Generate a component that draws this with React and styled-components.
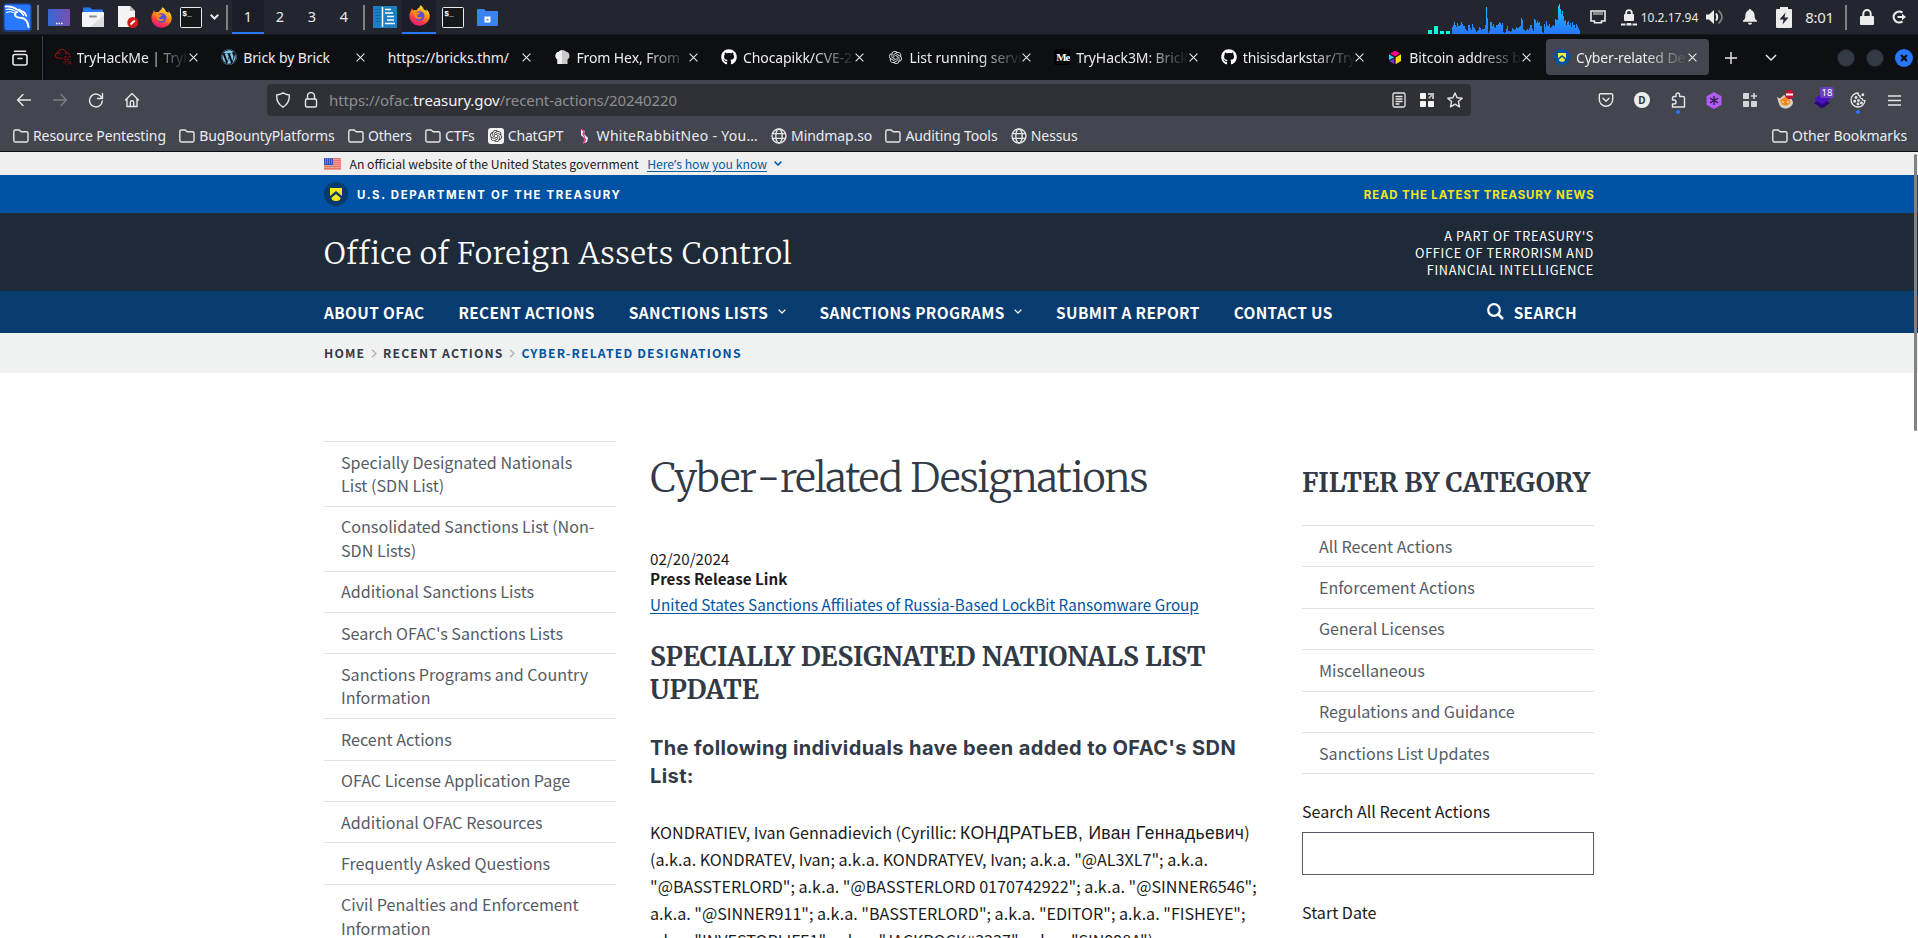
import React from 'react';
import styled, { createGlobalStyle } from 'styled-components';
import { SiOpenai, SiTryhackme, SiKalilinux } from 'react-icons/si';
import { FaGithub, FaWordpress } from 'react-icons/fa';

const SANS = '"Noto Sans CJK SC", "Noto Sans", sans-serif';
const UI = '"Noto Sans", sans-serif';
const SERIF = 'Merriweather, "Noto Serif", serif';
const PUBLIC = 'Inter, sans-serif';

const Global = createGlobalStyle`
  html, body { margin: 0; height: 938px; overflow: hidden; background: #fff; }
  * { box-sizing: border-box; }
  svg { display: block; flex: none; }
`;

/* ---------- desktop panel ---------- */
const Screen = styled.div`
  display: flex; flex-direction: column; height: 938px; overflow: hidden;
`;
const Panel = styled.header`
  display: flex; height: 35px; flex: none; align-items: stretch;
  background: #24262f; border-bottom: 1px solid #17181d; font-family: ${UI}; color: #e8e8e8;
`;
const Slot = styled.div`
  width: ${p => p.$w}px; display: flex; align-items: center; justify-content: center; flex: none;
`;
const PanelRule = styled.i`width: 2px; height: 25px; background: #808187;`;
const Workspace = styled(Slot)`
  font-size: 14.5px; padding-bottom: 1px;
  border-bottom: 2px solid ${p => (p.$active ? '#2777ff' : 'transparent')};
  background: ${p => (p.$active ? '#1b1d27' : 'transparent')};
`;
const Spacer = styled.div`flex: 1;`;
const PanelText = styled.span`font-size: ${p => p.$size}px; letter-spacing: ${p => p.$ls || 0}px; white-space: nowrap;`;

/* ---------- browser chrome ---------- */
const TabStrip = styled.div`
  display: flex; align-items: center; height: 45px; flex: none; background: #0e0f13; font-family: ${UI};
`;
const TabOverview = styled.div`
  width: 43px; height: 44px; display: flex; align-items: center; justify-content: center;
  padding-right: 2px; border-right: 1px solid #3d3f45; margin-right: 3.6px;
`;
const Tab = styled.div`
  width: 163px; margin-right: 3.6px; height: 36px; border-radius: 4px; padding: 0 10px 0 8px; flex: none;
  display: flex; align-items: center; background: ${p => (p.$active ? '#43464e' : 'transparent')};
  margin-top: -1px;
`;
const Favicon = styled.span`width: 16px; height: 16px; margin-right: 6px; flex: none; display: flex; align-items: center; justify-content: center;`;
const TabTitle = styled.span`
  flex: 1; min-width: 0; overflow: hidden; white-space: nowrap; font-size: 14px; letter-spacing: -0.1px; color: #ececee;
  line-height: 22px; padding-top: 1px;
  ${p => p.$fade && 'mask-image: linear-gradient(to right, #000 62%, rgba(0,0,0,.08) 98%);'}
`;
const CloseBox = styled.span`width: 12px; display: flex; justify-content: center; flex: none;`;
const MediumBadge = styled.span`
  width: 16px; height: 16px; border-radius: 2px; background: #000; color: #fff; overflow: hidden;
  font: 700 11px/16px "Liberation Serif", serif; padding-left: 2px; letter-spacing: -1px;
`;
const WindowDot = styled.span`
  width: 16px; height: 16px; border-radius: 50%; background: ${p => (p.$close ? '#2777ff' : '#333945')};
  margin-right: ${p => (p.$close ? 6 : 13)}px; display: flex; align-items: center; justify-content: center;
  box-shadow: 0 0 0 1px ${p => (p.$close ? '#2777ff' : '#20242c')};
`;
const Toolbar = styled.div`
  display: flex; align-items: center; height: 40px; flex: none; background: #43464e; font-family: ${UI}; padding-left: 6px;
`;
const UrlBar = styled.div`
  margin-left: 117px; width: 1204px; height: 32px; border-radius: 4px; background: #303136;
  display: flex; align-items: center; padding: 0 2px;
`;
const UrlText = styled.span`
  flex: 1; margin-left: 4px; font-size: 15px; letter-spacing: -0.1px; color: #8d8e92; white-space: nowrap;
  b { font-weight: 400; color: #f2f2f3; }
`;
const ToolSlot = styled.div`
  width: 36px; height: 36px; position: relative; display: flex; align-items: center; justify-content: center; flex: none;
`;
const Dot = styled.i`position: absolute; bottom: 4px; left: 16px; width: 4px; height: 4px; border-radius: 50%; background: #2777ff;`;
const Count = styled.i`
  position: absolute; top: 5px; left: 16px; width: 14px; height: 11px; border-radius: 2px; background: #6a3fc0;
  color: #fff; font: 400 9.5px/11px ${UI}; text-align: center;
`;
const LetterD = styled.span`
  width: 16px; height: 16px; border-radius: 50%; background: #ececec; color: #33353b;
  font: 700 10px/16px ${UI}; text-align: center;
`;
const Bookmarks = styled.div`
  display: flex; align-items: center; height: 32px; flex: none; background: #43464e; padding: 0 11px 0 13px;
  border-bottom: 1px solid #0c0c0f; font-family: ${UI};
`;
const Bookmark = styled.span`
  display: flex; align-items: center; gap: 4px; font-size: 14px; letter-spacing: ${p => p.$ls ?? -0.1}px; color: #ececee;
  white-space: nowrap; margin-right: 13.3px; line-height: 20px;
  &:last-child { margin-right: 0; }
`;
const ChatIcon = styled.span`
  width: 16px; height: 16px; border-radius: 3px; background: #f4f4f4; display: flex; align-items: center; justify-content: center;
`;

/* ---------- web page ---------- */
const Page = styled.div`flex: 1; overflow: hidden; background: #fff; position: relative; font-family: ${SANS}; color: #1b1b1b;`;
const ScrollThumb = styled.i`position: absolute; right: 1px; top: 2px; width: 3px; height: 277px; border-radius: 2px; background: #808283;`;
const Band = styled.div`
  height: ${p => p.$h}px; background: ${p => p.$bg}; padding: 0 324px; display: flex; align-items: center;
`;
const BannerText = styled.span`font-size: 12.2px; margin: 0 8.5px; white-space: nowrap;`;
const BannerLink = styled.a`
  font-size: 12.2px; color: #005ea2; text-decoration: underline; text-underline-offset: 2px; white-space: nowrap; margin-right: 7px;
  span { font-family: ${UI}; }
`;
const Dept = styled.span`
  font: 700 11.4px ${PUBLIC}; letter-spacing: 1.68px; color: #fff; margin-left: 9px; flex: 1; padding-top: 1px;
`;
const News = styled.span`font: 700 11.4px ${PUBLIC}; letter-spacing: .89px; color: #f6e41b; margin-right: -.5px; padding-top: 1px;`;
const Office = styled.span`font: 300 30px ${SERIF}; letter-spacing: .73px; color: #fff; flex: 1; padding-top: 2px;`;
const PartOf = styled.span`
  font-size: 12.7px; line-height: 17px; letter-spacing: .67px; color: #fff; text-align: right;
`;
const NavItem = styled.span`
  display: flex; align-items: center; gap: 9.4px; font-size: 15.4px; font-weight: 700; letter-spacing: .36px; color: #fff;
  margin-right: 34px; white-space: nowrap; line-height: 22px; padding-bottom: 1px;
`;
const NavSearch = styled(NavItem)`margin: 0 17px 0 auto;`;
const Crumb = styled.span`
  font-size: 12.2px; font-weight: 700; letter-spacing: 1.18px; color: ${p => (p.$on ? '#0053a4' : '#323a45')}; white-space: nowrap;
`;
const CrumbSep = styled.span`width: 17.8px; display: flex; justify-content: center;`;

const Columns = styled.main`
  display: grid; grid-template-columns: 292px 618px 292px; column-gap: 34px; padding: 68px 0 0 324px; align-items: start;
`;
const LinkList = styled.ul`
  list-style: none; margin: 0; padding: 0; border-bottom: 1px solid #dfe1e2;
`;
const LinkRow = styled.li`
  border-top: 1px solid #dfe1e2; padding: 8.6px 17px 8.4px; font-size: 16.13px; line-height: 23.4px; color: #565c65;
`;
const Article = styled.article`padding-top: 11.5px;`;
const Title = styled.h1`
  margin: 0 0 45.5px; font: 300 40px/50px ${SERIF}; letter-spacing: -1px; color: #323a45; white-space: nowrap;
`;
const TitleHyphen = styled.span`margin: 0 .8px;`;
const Meta = styled.div`font-size: 15.2px; line-height: 20px; font-weight: ${p => (p.$bold ? 700 : 400)};`;
const ReleaseLink = styled.a`
  display: block; margin-top: 4px; font-size: 15.22px; line-height: 24px; color: #0053a4;
  text-decoration: underline; text-underline-offset: 2px; white-space: nowrap;
`;
const Heading = styled.h2`
  margin: ${p => p.$m}; font: 700 26.2px/33px ${SERIF}; color: #323a45; white-space: nowrap; letter-spacing: .04px;
`;
const SubHeading = styled.h3`
  margin: 28px 0; font: 700 20px/28.3px ${PUBLIC}; letter-spacing: .4px; color: #323a45; white-space: nowrap;
`;
const Body = styled.p`margin: 0; font-size: 16.12px; line-height: 27px; white-space: nowrap;`;
const Cyrillic = styled.span`font: 17.5px/1 "Liberation Sans", sans-serif; letter-spacing: .35px;`;
const Aside = styled.aside`padding-top: 25px;`;
const Field = styled.label`display: block; font-size: 16.1px; line-height: 23.4px; margin-top: 26px;`;
const Input = styled.input`display: block; width: 292px; height: 43px; margin-top: 8px; border: 1px solid #565c65; background: #fff;`;

/* ---------- drawings ---------- */
const Ico = ({ s = 16, w = 1.4, c = '#e6e6e8', children, vb = '0 0 16 16' }) => (
  <svg width={s} height={s} viewBox={vb} fill="none" stroke={c} strokeWidth={w} strokeLinecap="round" strokeLinejoin="round">{children}</svg>
);
const Folder = () => <Ico><path d="M.8 4V12.6a1.4 1.4 0 0 0 1.4 1.4H13.6a1.4 1.4 0 0 0 1.4-1.4V5.2a1.4 1.4 0 0 0-1.4-1.4H8.2L6.2 2H2.2A1.4 1.4 0 0 0 .8 3.4Z" /></Ico>;
const Globe = () => <Ico><circle cx="8" cy="8" r="7" /><ellipse cx="8" cy="8" rx="3.2" ry="7" /><path d="M1.6 5.6H14.4M1.6 10.4H14.4" /></Ico>;
const Chevron = ({ s = 8, c = '#fff', w = 1.3 }) => <svg width={s} height={s * 0.6} viewBox="0 0 10 6" fill="none" stroke={c} strokeWidth={w * 10 / s}><path d="M.8.8 5 5 9.2.8" /></svg>;
const RightMark = () => <svg width="6" height="9" viewBox="0 0 6 9" fill="none" stroke="#a9aeb1" strokeWidth="1.2"><path d="M1 .7 5 4.5 1 8.3" /></svg>;
const Close = () => <svg width="9" height="9" viewBox="0 0 9 9" stroke="#e6e6e8" strokeWidth="1.1"><path d="M.6.6 8.4 8.4M8.4.6.6 8.4" /></svg>;

const Firefox = () => (
  <svg width="21" height="21" viewBox="0 0 21 21">
    <defs>
      <linearGradient id="ffx" x1=".8" y1="0" x2=".3" y2="1"><stop offset="0" stopColor="#fff44f" /><stop offset=".4" stopColor="#ff980e" /><stop offset=".75" stopColor="#ff3647" /><stop offset="1" stopColor="#e31587" /></linearGradient>
    </defs>
    <path d="M11.4.3c2.4 1.4 3 3.2 3.6 4.4 1.6.4 2.2 1.2 2.4 1.9.2-.9 0-1.9-.4-2.7 2.3 1.6 3.7 4.2 3.7 7.2C20.7 16.4 16 20.7 10.5 20.7S.4 16.3.4 10.7c0-2.6 1.1-4.4 1.8-5.3L2.8 3.3 4.3 5.5C5.2 5 6.6 4.9 7.6 5.3 8.6 3 9.7 2.9 10.5 2.5 10.5 1.8 10.9.9 11.4.3Z" fill="url(#ffx)" />
    <circle cx="10.7" cy="11" r="4.8" fill="#5b4fd6" />
    <path d="M3.5 6.8C5 6 7 6.6 8.2 7.6L11.2 7.7C10.9 9 9.5 9.3 8.6 9.9 7.7 10.6 8 12 9.3 12.3 11 12.7 12 11.4 13.3 12.2 12 14.5 8.5 14.6 6.8 12.9 5.6 11.8 5.4 9.6 3.5 6.8Z" fill="#ff8a16" />
  </svg>
);
const Terminal = () => (
  <svg width="22" height="21" viewBox="0 0 22 21"><rect x=".5" y=".5" width="21" height="20" rx="1" fill="#15171b" stroke="#ececec" />
    <text x="2.3" y="9" fill="#fff" fontFamily="Liberation Mono" fontWeight="700" fontSize="8">$_</text></svg>
);
const Kali = () => (
  <svg width="29" height="29" viewBox="0 0 29 29"><rect width="29" height="29" rx="4" fill="#174aa8" opacity=".6" /><rect x="1.5" y="1.5" width="26" height="25.5" rx="2" fill="#2777ff" />
    <g fill="none" stroke="#fff" strokeLinecap="round">
      <path d="M2.500 3.500Q9 3 14 6.500Q18 8 20.500 12" strokeWidth="1.800" /><path d="M3 6.500Q8 5.500 12 8M3.500 9.500Q7 8 10.500 9.500" strokeWidth="1.200" />
      <path d="M14 9Q10.500 10.500 13 13.500 15 15 19 15 24.500 16 25.500 24" strokeWidth="2" /><path d="M16 6.500 21.500 9.500 23.500 13" strokeWidth="1.600" />
    </g></svg>
);
const DesktopIcon = () => (
  <svg width="22" height="17" viewBox="0 0 22 17"><defs><linearGradient id="dsk"><stop stopColor="#3568d4" /><stop offset="1" stopColor="#7a4fb0" /></linearGradient></defs>
    <rect width="22" height="17" rx="1" fill="url(#dsk)" /><path d="M8 14.5h1.5M10.5 14.5H12M13 14.5h1.5" stroke="#fff" strokeWidth="1.3" /></svg>
);
const FilesIcon = () => (
  <svg width="22" height="20" viewBox="0 0 22 20"><path d="M1 4V1.5A1 1 0 0 1 2 .5H8L10 2.5H20A1 1 0 0 1 21 3.5V7H1Z" fill="#2777ff" /><rect y="5" width="22" height="15" rx="1" fill="#f4f4f4" /><path d="M22 8V20H8Z" fill="#dedede" /><rect x="7" y="8.5" width="8" height="2" rx="1" fill="#8b8f98" /></svg>
);
const DocIcon = () => (
  <svg width="21" height="22" viewBox="0 0 21 22"><path d="M0 0H12L17 5V21H0Z" fill="#f4f4f4" /><path d="M12 0V5H17Z" fill="#bdbdbd" /><circle cx="14.8" cy="16.5" r="5.5" fill="#d41c1c" /><path d="M12.5 18.5 16.8 14.5" stroke="#fff" strokeWidth="2" /></svg>
);
const EditorIcon = () => (
  <svg width="24" height="22" viewBox="0 0 24 22"><rect width="24" height="22" fill="#1d7fc0" /><path d="M2 3.5H8M2 6.5H8M2 9.5H8M2 12.5H8M2 15.5H8" stroke="#1467a3" strokeWidth="1.2" /><path d="M9.5 1V21" stroke="#fff" strokeWidth="1.5" /><path d="M12 3.5H18M12 7H20M14 10.5H21M14 14H21M12 17.5H22" stroke="#fff" strokeWidth="1.6" /></svg>
);
const BlueFolder = () => (
  <svg width="21" height="17" viewBox="0 0 21 17"><path d="M1 0H7L9 2H20A1 1 0 0 1 21 3V16A1 1 0 0 1 20 17H1A1 1 0 0 1 0 16V1A1 1 0 0 1 1 0Z" fill="#3a83f2" /><rect x="7.5" y="7.5" width="6" height="6" fill="#fff" /><rect x="9.5" y="10" width="2" height="1.5" fill="#3a83f2" /></svg>
);

const LOAD = [7, 9, 12, 9, 7, 11, 8, 8, 9, 12, 10, 8, 8, 5, 4, 3, 9, 9, 6, 4, 10, 7, 6, 4, 2, 3, 4, 7, 6, 4, 5, 5, 5, 9, 27, 16, 1, 3, 12, 12, 8, 10, 7, 6, 9, 9, 10, 12, 11, 9, 11, 2, 1, 2, 5, 8, 3, 3, 2, 3, 6, 5, 4, 5, 7, 6, 6, 7, 8, 16, 14, 5, 4, 3, 4, 5, 4, 6, 9, 9, 5, 3, 15, 14, 11, 13, 11, 12, 8, 8, 2, 1, 10, 7, 13, 9, 8, 10, 6, 7, 8, 9, 8, 15, 14, 14, 28, 30, 25, 20, 23, 18, 13, 14, 9, 12, 13, 9, 11, 7, 12, 9, 9, 6, 10, 8, 6, 4];
const LoadGraph = () => (
  <svg width="152" height="34" viewBox="0 0 152 34" shapeRendering="crispEdges">
    <defs><linearGradient id="ld" gradientUnits="userSpaceOnUse" x1="0" y1="4" x2="0" y2="34"><stop stopColor="#10d8f0" /><stop offset=".6" stopColor="#2690f8" /><stop offset="1" stopColor="#2777ff" /></linearGradient></defs>
    {[4, 8, 3, 3].map((h, i) => <rect key={i} x={i * 6} y={34 - h} width="4" height={h} fill="#00ffdc" />)}
    {LOAD.map((h, i) => <rect key={i} x={24 + i} y={34 - h} width="1" height={h} fill="url(#ld)" />)}
  </svg>
);
const Badge = ({ s = 16, bg = '#0053a4', fg = '#ffee33' }) => (
  <svg width={s} height={s} viewBox="0 0 24 24"><circle cx="12" cy="12" r="12" fill={bg} /><path d="M6 6H18V14L12 9 6 14Z" fill={fg} /><path d="M7.5 15.8 12 12 16.5 15.8Q17 18.7 12 19 7 18.7 7.5 15.8Z" fill={fg} /></svg>
);
const Chef = () => <svg width="15" height="15" viewBox="0 0 15 15"><path d="M2.5 14V9.5C-.5 8 0 2 3.5 2 5-.3 10-.3 11.5 2 15 2 15.5 8 12.5 9.5V14Z" fill="#c9c9c9" /><path d="M2.5 14V9.5C-.5 8 0 2 3.5 2 4.3.8 5.8.3 7 .3V14Z" fill="#efefef" /></svg>;
const Cube = () => <svg width="14" height="15" viewBox="0 0 14 15"><path d="M7 .5 12 3.5 7 6.5 2 3.5Z" fill="#ff0080" /><path d="M7.6 7.5 13 4.3V11L7.6 14.2Z" fill="#ffe000" /><path d="M1 4.3 6.4 7.5 1 10Z" fill="#2ad4f0" /><path d="M6.4 8.5V14.2L1 11Z" fill="#7a2ad8" /></svg>;
const Flag = () => (
  <svg width="17" height="12" viewBox="0 0 17 12"><rect width="17" height="12" fill="#f5e9e4" />{[0, 2, 4, 6, 8, 10].map(y => <rect key={y} y={y + .3} width="17" height="1.15" fill="#e0433a" />)}
    <rect width="9" height="7" fill="#3a4fb5" />{[1, 3, 5].map(y => <path key={y} d={`M1 ${y}H9`} stroke="#c8cff5" strokeWidth=".8" strokeDasharray="1 1" />)}</svg>
);

const TABS = [
  ['TryHackMe | TryH', <SiTryhackme size={16} color="#c11111" />, true],
  ['Brick by Brick', <FaWordpress size={16} color="#7cc3e6" />],
  ['https://bricks.thm/', null],
  ['From Hex, From', <Chef />, true],
  ['Chocapikk/CVE-2', <FaGithub size={16} color="#fff" />, true],
  ['List running servi', <SiOpenai size={13} color="#e6e6e8" />, true],
  ['TryHack3M: Brick', <MediumBadge>Me</MediumBadge>, true],
  ['thisisdarkstar/Try', <FaGithub size={16} color="#fff" />, true],
  ['Bitcoin address b', <Cube />, true],
  ['Cyber-related De', <Badge />, true],
];

const SIDE_LINKS = [
  ['Specially Designated Nationals', 'List (SDN List)'], ['Consolidated Sanctions List (Non-', 'SDN Lists)'], ['Additional Sanctions Lists'],
  ["Search OFAC's Sanctions Lists"], ['Sanctions Programs and Country', 'Information'], ['Recent Actions'], ['OFAC License Application Page'],
  ['Additional OFAC Resources'], ['Frequently Asked Questions'], ['Civil Penalties and Enforcement', 'Information'],
];
const CATEGORIES = ['All Recent Actions', 'Enforcement Actions', 'General Licenses', 'Miscellaneous', 'Regulations and Guidance', 'Sanctions List Updates'];

function DesktopPanel() {
  return (
    <Panel>
      <Slot $w={34}><Kali /></Slot>
      <Slot $w={8}><PanelRule /></Slot>
      <Slot $w={34}><DesktopIcon /></Slot>
      <Slot $w={34}><FilesIcon /></Slot>
      <Slot $w={36}><DocIcon /></Slot>
      <Slot $w={30}><Firefox /></Slot>
      <Slot $w={30}><Terminal /></Slot>
      <Slot $w={16}><Chevron s={9} w={2} c="#e8e8e8" /></Slot>
      <Slot $w={10}><PanelRule /></Slot>
      {[1, 2, 3, 4].map(n => <Workspace key={n} $w={32} $active={n === 1}>{n}</Workspace>)}
      <Slot $w={8}><PanelRule /></Slot>
      <Slot $w={34}><EditorIcon /></Slot>
      <Workspace $w={34} $active><Firefox /></Workspace>
      <Slot $w={34}><Terminal /></Slot>
      <Slot $w={34}><BlueFolder /></Slot>
      <Spacer />
      <LoadGraph />
      <Slot $w={36}>
        <svg width="16" height="14" viewBox="0 0 16 14" fill="none" stroke="#ececec" strokeWidth="1.6"><path d="M1 1H15V11H11.5V12.7H4.5V11H1Z" /><path d="M4 2V5M6 2V5M8 2V5M10 2V5M12 2V5" strokeWidth="1" /></svg>
      </Slot>
      <Slot $w={25}>
        <svg width="16" height="17" viewBox="0 0 16 17"><rect x="3" y="5" width="10" height="7" rx="1" fill="#ececec" /><path d="M5.2 6V4a2.8 2.8 0 0 1 5.6 0V6" fill="none" stroke="#ececec" strokeWidth="1.8" /><path d="M0 15.5H4.5M5.5 15.5H10.5M11.5 15.5H16" stroke="#ececec" strokeWidth="2" /><path d="M6 14.5H10" stroke="#ececec" /></svg>
      </Slot>
      <Slot $w={57}><PanelText $size={12}>10.2.17.94</PanelText></Slot>
      <Slot $w={34}>
        <svg width="18" height="16" viewBox="0 0 18 16"><path d="M0 5.5H3L8 1V15L3 10.5H0Z" fill="#ececec" /><path d="M10 4.5Q12.5 8 10 11.5" fill="none" stroke="#ececec" strokeWidth="2" /><path d="M12.5 1.5Q19.5 8 12.5 14.5" fill="none" stroke="#85868c" strokeWidth="1.6" /></svg>
      </Slot>
      <Slot $w={35}>
        <svg width="14" height="16" viewBox="0 0 14 16" fill="#ececec"><path d="M7 0A1.3 1.3 0 0 1 8.3 1.3C10.5 2 11.6 4 11.6 6.5 11.6 9.5 12.3 10.5 14 11.5V12.7H0V11.5C1.7 10.5 2.4 9.5 2.4 6.5 2.4 4 3.5 2 5.7 1.3A1.3 1.3 0 0 1 7 0ZM5 13.7H9A2 2 0 0 1 5 13.7Z" /></svg>
      </Slot>
      <Slot $w={34}>
        <svg width="16" height="21" viewBox="0 0 16 21"><path d="M4 2V0H12V2H15A1 1 0 0 1 16 3V20A1 1 0 0 1 15 21H1A1 1 0 0 1 0 20V3A1 1 0 0 1 1 2Z" fill="#ececec" /><path d="M9.5 5.5 3.5 12.5H7.5L6.5 17.5 12.5 10.5H8.5Z" fill="#24262f" /></svg>
      </Slot>
      <Slot $w={37}><PanelText $size={15} $ls={-0.3}>8:01</PanelText></Slot>
      <Slot $w={16}><PanelRule /></Slot>
      <Slot $w={26}>
        <svg width="14" height="16" viewBox="0 0 14 16"><rect y="7" width="14" height="9" rx="1" fill="#ececec" /><path d="M3.3 8V4.7a3.7 3.7 0 0 1 7.4 0V8" fill="none" stroke="#ececec" strokeWidth="2" /></svg>
      </Slot>
      <Slot $w={38}>
        <svg width="14" height="14" viewBox="0 0 14 14" fill="none" stroke="#ececec" strokeWidth="2.2"><path d="M10.5 2.6A5.5 5.5 0 1 0 10.5 11.4M5.5 7H11" /><path d="M10 3.8 14 7 10 10.2Z" fill="#ececec" stroke="none" /></svg>
      </Slot>
    </Panel>
  );
}

function Tabs() {
  return (
    <TabStrip>
      <TabOverview><Ico w={1.6}><rect x="1" y="4.5" width="14" height="10.5" rx="2" /><path d="M2.5 1.2H13.5M6 8.5H10" /></Ico></TabOverview>
      {TABS.map(([title, icon, fade], i) => (
        <Tab key={i} $active={i === TABS.length - 1}>
          {icon && <Favicon>{icon}</Favicon>}
          <TabTitle $fade={fade}>{title}</TabTitle>
          <CloseBox><Close /></CloseBox>
        </Tab>
      ))}
      <Slot $w={36}><svg width="12" height="12" viewBox="0 0 12 12" stroke="#ececec" strokeWidth="1.4"><path d="M6 0V12M0 6H12" /></svg></Slot>
      <Slot $w={44}><Chevron s={12} c="#ececec" w={1.4} /></Slot>
      <Spacer />
      <WindowDot /><WindowDot />
      <WindowDot $close><svg width="8" height="8" viewBox="0 0 8 8" stroke="#0e0f13" strokeWidth="2.2"><path d="M1 1 7 7M7 1 1 7" /></svg></WindowDot>
    </TabStrip>
  );
}

function Navigation() {
  return (
    <Toolbar>
      <ToolSlot><Ico><path d="M14.5 8H1.5M7 2.5 1.5 8 7 13.5" /></Ico></ToolSlot>
      <ToolSlot><Ico c="#7d7f86"><path d="M1.5 8H14.5M9 2.5 14.5 8 9 13.5" /></Ico></ToolSlot>
      <ToolSlot><Ico><path d="M14 6.5A6.4 6.4 0 1 0 14.3 9M14.5 1.5V6.5H9.5" /></Ico></ToolSlot>
      <ToolSlot><Ico><path d="M1.5 8 8 1.5 14.5 8M3 7V14.5H13V7M6.3 14.5V10.5A1.7 1.7 0 0 1 9.7 10.5V14.5" /></Ico></ToolSlot>
      <UrlBar>
        <Slot $w={28}><Ico><path d="M8 .8C9.6 2.3 12 2.8 14.3 3 14.6 8 12.5 12.5 8 15.2 3.5 12.5 1.4 8 1.7 3 4 2.8 6.4 2.3 8 .8Z" /></Ico></Slot>
        <Slot $w={28}><Ico><rect x="2.5" y="7" width="11" height="8" rx="1.5" /><path d="M4.5 7V4A3.5 3.5 0 0 1 11.5 4V7" /></Ico></Slot>
        <UrlText>https://ofac.<b>treasury.gov</b>/recent-actions/20240220</UrlText>
        <Slot $w={28}><Ico w={1.3}><rect x="2" y="1" width="12" height="14" rx="1.5" /><path d="M5 4.5H11M5 7H11M5 9.5H11M5 12H8" /></Ico></Slot>
        <Slot $w={28}><svg width="14" height="14" viewBox="0 0 14 14" fill="#f4f4f4"><rect width="6" height="6" rx=".8" /><rect y="8" width="6" height="6" rx=".8" /><rect x="8" y="8" width="6" height="6" rx=".8" /><path d="M8 0H14V6H12V3.3L9.2 6 8 4.8 10.7 2H8Z" fill="#bcbcbe" /></svg></Slot>
        <Slot $w={28}><Ico><path d="M8 1 10.1 5.7 15.2 6.2 11.4 9.6 12.5 14.8 8 12.1 3.5 14.8 4.6 9.6.8 6.2 5.9 5.7Z" /></Ico></Slot>
      </UrlBar>
      <Spacer />
      <ToolSlot><Ico><path d="M1.3 3A1.3 1.3 0 0 1 2.6 1.8H13.4A1.3 1.3 0 0 1 14.7 3V7.5A6.7 6.7 0 0 1 1.3 7.5Z" /><path d="M5 6.3 8 9.2 11 6.3" /></Ico></ToolSlot>
      <ToolSlot><LetterD>D</LetterD></ToolSlot>
      <ToolSlot><Ico><path d="M6 4.5V2.8A1.8 1.8 0 0 1 9.6 2.8V4.5H13A1.5 1.5 0 0 1 14.5 6V15H2.5V12H4A2 2 0 0 0 4 8H2.5V6A1.5 1.5 0 0 1 4 4.5Z" /></Ico><Dot /></ToolSlot>
      <ToolSlot><svg width="16" height="17" viewBox="0 0 16 17"><path d="M8 0 15.5 4.2V12.8L8 17 .5 12.8V4.2Z" fill="#b25cf6" /><path d="M8 4V13M4 6.2 12 10.8M12 6.2 4 10.8" stroke="#33204f" strokeWidth="1.4" /></svg></ToolSlot>
      <ToolSlot><svg width="14" height="14" viewBox="0 0 14 14" fill="#d6d6d9"><rect width="6" height="6" rx=".8" /><rect y="8" width="6" height="6" rx=".8" /><rect x="8" y="8" width="6" height="6" rx=".8" /><path d="M10.2 0H11.8V2.2H14V3.8H11.8V6H10.2V3.8H8V2.2H10.2Z" /></svg></ToolSlot>
      <ToolSlot><svg width="20" height="20" viewBox="0 0 20 20"><path d="M1 7 4 8.5 8 5 15 8 17 12C17 16 13 18.5 9.5 18.5S3 16 2.5 12Z" fill="#d9d3c4" /><path d="M4 10 9 7 14.5 11C14 15 11 15.5 9 15.5S5.5 15 4 10Z" fill="#f08a1c" /><path d="M6 11.5 8 12.5M11 12.5 13 11.5" stroke="#fff" /><circle cx="13.5" cy="4.5" r="4.7" fill="#c8102e" /><path d="M10 4.5H17" stroke="#fff" strokeWidth="2" /></svg></ToolSlot>
      <ToolSlot><svg width="16" height="18" viewBox="0 0 16 18"><path d="M8 6.5 16 12 8 17.5 0 12Z" fill="#2a0578" /><path d="M8 2.5 16 8 8 13.5 0 8Z" fill="#4a0fc0" /></svg><Count>18</Count></ToolSlot>
      <ToolSlot><Ico w={1.3}><path d="M8 1A7 7 0 1 0 15 8.5C13.5 9 12.3 8 12.3 6.8 10.5 6.8 9.8 5.5 10.2 4.2 8.8 4 8 2.5 8 1Z" /><circle cx="6" cy="5.5" r=".8" /><circle cx="4.7" cy="9.3" r=".8" /><circle cx="8.5" cy="8.5" r=".8" /><circle cx="8" cy="12" r=".8" /><circle cx="11.5" cy="11" r=".8" /><circle cx="12.8" cy="2.8" r=".8" /></Ico><Dot /></ToolSlot>
      <ToolSlot><svg width="13" height="11" viewBox="0 0 13 11" stroke="#e6e6e8" strokeWidth="1.4"><path d="M0 1H13M0 5.5H13M0 10H13" /></svg></ToolSlot>
      <Slot $w={6} />
    </Toolbar>
  );
}

export default function App() {
  return (
    <Screen>
      <Global />
      <DesktopPanel />
      <Tabs />
      <Navigation />
      <Bookmarks>
        <Bookmark><Folder />Resource Pentesting</Bookmark>
        <Bookmark><Folder />BugBountyPlatforms</Bookmark>
        <Bookmark $ls={-0.2}><Folder />Others</Bookmark>
        <Bookmark $ls={-0.3}><Folder />CTFs</Bookmark>
        <Bookmark $ls={-0.2}><ChatIcon><SiOpenai size={12} color="#333" /></ChatIcon>ChatGPT</Bookmark>
        <Bookmark $ls={0.3}>
          <svg width="16" height="16" viewBox="0 0 16 16"><path d="M4 1 8 3 7 6 11 10 10 14 6 15.5 8 11 4 7Z" fill="#fff" /><path d="M4 1 7 3.5 6 6 7.5 9M6 15.5 8.5 12 7 9.5" stroke="#e8388a" strokeWidth="1.5" fill="none" /></svg>
          WhiteRabbitNeo - You…
        </Bookmark>
        <Bookmark><Globe />Mindmap.so</Bookmark>
        <Bookmark><Folder />Auditing Tools</Bookmark>
        <Bookmark><Globe />Nessus</Bookmark>
        <Spacer />
        <Bookmark><Folder />Other Bookmarks</Bookmark>
      </Bookmarks>

      <Page>
        <Band $h={23} $bg="#efefef">
          <Flag />
          <BannerText>An official website of the United States government</BannerText>
          <BannerLink>Here<span>’</span>s how you know</BannerLink>
          <Chevron s={8} c="#005ea2" w={1.6} />
        </Band>
        <Band $h={38} $bg="#0053a4">
          <Badge s={24} bg="#0a3a6b" fg="#f9e520" />
          <Dept>U.S. DEPARTMENT OF THE TREASURY</Dept>
          <News>READ THE LATEST TREASURY NEWS</News>
        </Band>
        <Band $h={78} $bg="#1e2a37">
          <Office>Office of Foreign Assets Control</Office>
          <PartOf>A PART OF TREASURY'S<br />OFFICE OF TERRORISM AND<br />FINANCIAL INTELLIGENCE</PartOf>
        </Band>
        <Band $h={42} $bg="#083b6f">
          <NavItem>ABOUT OFAC</NavItem>
          <NavItem>RECENT ACTIONS</NavItem>
          <NavItem>SANCTIONS LISTS<Chevron /></NavItem>
          <NavItem>SANCTIONS PROGRAMS<Chevron /></NavItem>
          <NavItem>SUBMIT A REPORT</NavItem>
          <NavItem>CONTACT US</NavItem>
          <NavSearch><svg width="17" height="17" viewBox="0 0 17 17" fill="none" stroke="#fff" strokeWidth="2.2"><circle cx="7" cy="7" r="5.8" /><path d="M11.2 11.2 16 16" strokeWidth="2.6" /></svg>SEARCH</NavSearch>
        </Band>
        <Band $h={40} $bg="#f0f2f2">
          <Crumb>HOME</Crumb><CrumbSep><RightMark /></CrumbSep>
          <Crumb>RECENT ACTIONS</Crumb><CrumbSep><RightMark /></CrumbSep>
          <Crumb $on>CYBER-RELATED DESIGNATIONS</Crumb>
        </Band>

        <Columns>
          <LinkList>
            {SIDE_LINKS.map(([a, b]) => <LinkRow key={a}>{a}{b && <br />}{b}</LinkRow>)}
          </LinkList>
          <Article>
            <Title>Cyber<TitleHyphen>-</TitleHyphen>related Designations</Title>
            <Meta>02/20/2024</Meta>
            <Meta $bold>Press Release Link</Meta>
            <ReleaseLink>United States Sanctions Affiliates of Russia-Based LockBit Ransomware Group</ReleaseLink>
            <Heading $m="24px 0 0">SPECIALLY DESIGNATED NATIONALS LIST<br />UPDATE</Heading>
            <SubHeading>The following individuals have been added to OFAC's SDN<br />List:</SubHeading>
            <Body>
              KONDRATIEV, Ivan Gennadievich (Cyrillic: <Cyrillic>КОНДРАТЬЕВ, Иван Геннадьевич</Cyrillic>)<br />
              (a.k.a. KONDRATEV, Ivan; a.k.a. KONDRATYEV, Ivan; a.k.a. "@AL3XL7"; a.k.a.<br />
              "@BASSTERLORD"; a.k.a. "@BASSTERLORD 0170742922"; a.k.a. "@SINNER6546";<br />
              a.k.a. "@SINNER911"; a.k.a. "BASSTERLORD"; a.k.a. "EDITOR"; a.k.a. "FISHEYE";<br />
              a.k.a. "INVESTORLIFE1"; a.k.a. "JACKROCK#3337"; a.k.a. "SIN998A")
            </Body>
          </Article>
          <Aside>
            <Heading $m="0 0 26px">FILTER BY CATEGORY</Heading>
            <LinkList>{CATEGORIES.map(c => <LinkRow key={c}>{c}</LinkRow>)}</LinkList>
            <Field>Search All Recent Actions<Input /></Field>
            <Field>Start Date</Field>
          </Aside>
        </Columns>
        <ScrollThumb />
      </Page>
    </Screen>
  );
}
